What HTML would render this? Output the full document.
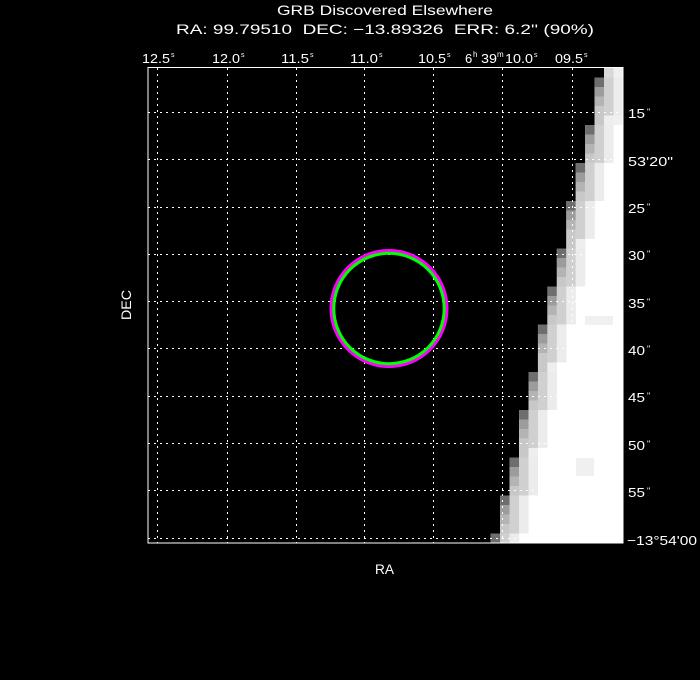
<!DOCTYPE html>
<html><head><meta charset="utf-8"><style>
html,body{margin:0;padding:0;background:#000;width:700px;height:680px;overflow:hidden}
svg{display:block}
text{font-family:"Liberation Sans",sans-serif;fill:#fff}
</style></head><body>
<svg width="700" height="680" viewBox="0 0 700 680" xmlns="http://www.w3.org/2000/svg" font-size="14">
<defs>
<clipPath id="c"><rect x="148" y="68" width="475" height="475"/></clipPath>
<g id="band">
<rect x="0" y="0" width="9.5" height="9.5" fill="#6e6e6e"/>
<rect x="0" y="9.5" width="9.5" height="9.5" fill="#9c9c9c"/>
<rect x="0" y="19" width="9.5" height="9.5" fill="#b4b4b4"/>
<rect x="0" y="28.5" width="9.5" height="28.5" fill="#c8c8c8"/>
<rect x="0" y="57" width="9.5" height="28.5" fill="#e4e4e4"/>
<rect x="9.45" y="0" width="9.5" height="38" fill="#d0d0d0"/>
<rect x="9.45" y="38" width="9.5" height="38" fill="#eeeeee"/>
<rect x="18.9" y="0" width="9.5" height="38" fill="#ececec"/>
</g>
</defs>
<text x="277" y="15" textLength="216" lengthAdjust="spacingAndGlyphs">GRB Discovered Elsewhere</text>
<text x="176" y="34" textLength="418" lengthAdjust="spacingAndGlyphs">RA: 99.79510 &#160;DEC: −13.89326 &#160;ERR: 6.2'' (90%)</text>

<g clip-path="url(#c)">
<polygon fill="#fff" points="604.1,68 604.1,77.5 594.65,77.5 594.65,125 585.2,125 585.2,163 575.75,163 575.75,201 566.3,201 566.3,248.5 556.85,248.5 556.85,286.5 547.4,286.5 547.4,324.5 537.95,324.5 537.95,372 528.5,372 528.5,410 519.05,410 519.05,457.5 509.6,457.5 509.6,495.5 500.15,495.5 500.15,533.5 490.7,533.5 490.7,543 623,543 623,68"/>
<rect x="604.1" y="68" width="9.5" height="57" fill="#d8d8d8"/>
<rect x="613.5" y="68" width="9.5" height="57" fill="#f0f0f0"/>
<use href="#band" transform="translate(594.65,77.5)"/>
<use href="#band" transform="translate(585.2,125)"/>
<use href="#band" transform="translate(575.75,163)"/>
<use href="#band" transform="translate(566.3,201)"/>
<use href="#band" transform="translate(556.85,248.5)"/>
<use href="#band" transform="translate(547.4,286.5)"/>
<use href="#band" transform="translate(537.95,324.5)"/>
<use href="#band" transform="translate(528.5,372)"/>
<use href="#band" transform="translate(519.05,410)"/>
<use href="#band" transform="translate(509.6,457.5)"/>
<use href="#band" transform="translate(500.15,495.5)"/>
<use href="#band" transform="translate(490.7,533.5)"/>
<rect x="585" y="316" width="28" height="9" fill="#f0f0f0"/>
<rect x="576" y="458" width="18" height="18" fill="#f0f0f0"/>
</g>

<g stroke="#fff" stroke-width="1" stroke-dasharray="2,4" fill="none">
<path d="M157.5 68V543M227.5 68V543M296.5 68V543M364.5 68V543M433.5 68V543M502.5 68V543M572.5 68V543"/>
<path d="M148 112.5H623M148 159.5H623M148 207.5H623M148 254.5H623M148 301.5H623M148 348.5H623M148 396.5H623M148 443.5H623M148 490.5H623M148 538.5H623"/>
</g>
<rect x="148" y="67.5" width="475" height="475.5" fill="none" stroke="#fff" stroke-width="1"/>

<circle cx="389" cy="308.5" r="58" fill="none" stroke="#ff00ff" stroke-width="3"/>
<circle cx="389" cy="308.5" r="55.2" fill="none" stroke="#00ff00" stroke-width="3"/>

<g font-size="13">
<text x="142" y="63" textLength="28" lengthAdjust="spacingAndGlyphs">12.5</text><text x="171" y="57" font-size="7">s</text>
<text x="212" y="63" textLength="28" lengthAdjust="spacingAndGlyphs">12.0</text><text x="241" y="57" font-size="7">s</text>
<text x="281" y="63" textLength="28" lengthAdjust="spacingAndGlyphs">11.5</text><text x="310" y="57" font-size="7">s</text>
<text x="350" y="63" textLength="28" lengthAdjust="spacingAndGlyphs">11.0</text><text x="379" y="57" font-size="7">s</text>
<text x="418" y="63" textLength="28" lengthAdjust="spacingAndGlyphs">10.5</text><text x="447" y="57" font-size="7">s</text>
<text x="465" y="63">6</text><text x="473" y="57" font-size="8">h</text>
<text x="481" y="63" textLength="16" lengthAdjust="spacingAndGlyphs">39</text><text x="497" y="57" font-size="8">m</text>
<text x="505" y="63" textLength="28" lengthAdjust="spacingAndGlyphs">10.0</text><text x="534" y="57" font-size="7">s</text>
<text x="555" y="63" textLength="28" lengthAdjust="spacingAndGlyphs">09.5</text><text x="584" y="57" font-size="7">s</text>

<text x="628" y="118" textLength="17" lengthAdjust="spacingAndGlyphs">15</text><text x="647" y="115" font-size="9">"</text>
<text x="628" y="166" textLength="45" lengthAdjust="spacingAndGlyphs">53'20"</text>
<text x="628" y="213" textLength="17" lengthAdjust="spacingAndGlyphs">25</text><text x="647" y="210" font-size="9">"</text>
<text x="628" y="260" textLength="17" lengthAdjust="spacingAndGlyphs">30</text><text x="647" y="257" font-size="9">"</text>
<text x="628" y="308" textLength="17" lengthAdjust="spacingAndGlyphs">35</text><text x="647" y="305" font-size="9">"</text>
<text x="628" y="355" textLength="17" lengthAdjust="spacingAndGlyphs">40</text><text x="647" y="352" font-size="9">"</text>
<text x="628" y="402" textLength="17" lengthAdjust="spacingAndGlyphs">45</text><text x="647" y="399" font-size="9">"</text>
<text x="628" y="450" textLength="17" lengthAdjust="spacingAndGlyphs">50</text><text x="647" y="447" font-size="9">"</text>
<text x="628" y="497" textLength="17" lengthAdjust="spacingAndGlyphs">55</text><text x="647" y="494" font-size="9">"</text>
<text x="627" y="545" textLength="70" lengthAdjust="spacingAndGlyphs">−13°54'00</text>
</g>

<text x="375" y="574" textLength="19" lengthAdjust="spacingAndGlyphs">RA</text>
<text transform="translate(131,320) rotate(-90)" textLength="30" lengthAdjust="spacingAndGlyphs">DEC</text>
</svg>
</body></html>
